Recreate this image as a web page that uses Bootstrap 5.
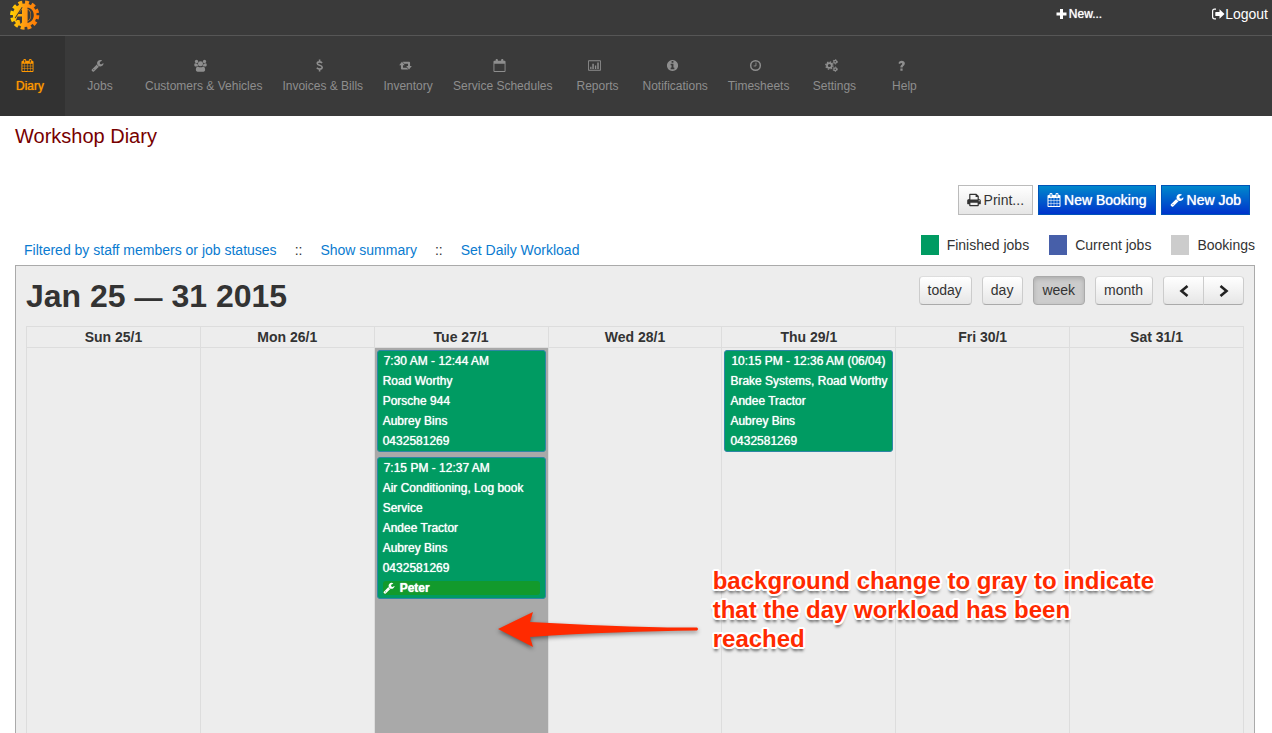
<!DOCTYPE html>
<html lang="en">
<head>
<meta charset="utf-8">
<meta name="viewport" content="width=device-width, initial-scale=1">
<title>Workshop Diary</title>
<link href="https://cdn.jsdelivr.net/npm/bootstrap@5.3.0/dist/css/bootstrap.min.css" rel="stylesheet">
<style>
body{font-family:"Liberation Sans",Arial,sans-serif;font-size:14px;line-height:20px;color:#333;background:#fff}
a{text-decoration:none}
.ico{width:14px;height:14px;fill:currentColor;stroke:none;flex:none}
.heavy{text-shadow:0 0 1px currentColor}
.topbar{height:36px;background:#3a3a3a;border-bottom:1px solid #565656}
.topbar a{color:#fff}
.topbar .logo{padding:0 0 0 10px}
.new-link{font-size:12px;margin-right:109px;gap:2px}
.new-link .ico{width:11px;height:12px}
.logout-link{margin-right:4px;padding-top:2px}
.menu{background:#3a3a3a;height:80px;font-size:12px}
.menu .nav-link{min-width:70px;height:80px;padding:23px 10px 0;color:#8e8e8e;line-height:20px}
.menu .nav-link .ico{width:13px;height:13px;margin:0 6px 1px 0}
.menu .nav-link span{line-height:20px;padding-top:3px}
.menu .nav-link.active{min-width:65px;padding-right:15px;background:#323232;color:#ff9800}
.page-title{font-size:20px;line-height:40px;color:#700;margin:0;font-weight:400}
.pane{padding:0 17px 0 15px}
.tools{padding:29px 5px 0 0;gap:5px}
.act{--bs-btn-font-size:14px;--bs-btn-line-height:20px;--bs-btn-padding-x:8px;--bs-btn-padding-y:4px;--bs-btn-border-radius:0;gap:3px}
.act-plain{border-color:#bbb;background:linear-gradient(#fff,#e6e6e6);color:#333}
.act-blue,.act-blue:hover{border-color:#0054b8;background:linear-gradient(#08c,#03c);color:#fff}
.links-row{padding:20px 0 5px}
.filters{padding:5px 0 0 9px;gap:18px}
.filters a{color:#0a7bd0}
.legend{gap:20px}
.swatch{width:18px;height:20px}
.sw-done{background:#009b62}
.sw-now{background:#475fa9}
.sw-book{background:#ccc}
.cal{border:1px solid #aaa;border-bottom:0;background:#ededed;padding:10px 10px 0}
.cal h2{font-size:32px;line-height:40px;font-weight:700;margin:0}
.cal h2 span{font-size:28px}
.cal-head{height:50px}
.views{gap:10px}
.tb{--bs-btn-font-size:14px;--bs-btn-line-height:20px;--bs-btn-border-radius:4px;height:29px;padding:3px 9px 4px 8px;color:#333;border-color:#ddd #ccc #aaa;background:linear-gradient(#fff,#e6e6e6)}
.tb.active{background:#ccc;color:#333;border-color:#aaa;box-shadow:inset 0 2px 4px rgba(0,0,0,.15)}
.btn.tb{line-height:19px}
.tb-arrow{width:41px;padding:3px 0 4px}
.week{width:100%;table-layout:fixed;border-collapse:collapse}
.week th,.week td{border:1px solid #ddd;padding:0}
.week th{text-align:center;font-weight:700;line-height:20px}
.week td{vertical-align:top;height:calc(100vh - 347px);padding:2px 2px 0;border-bottom:0}
.week td.full{background:#a9a9a9;position:relative}
.job{display:block;border:1px solid #2f86a5;border-radius:3px;background:#009b62;color:#fff;font-size:12px;line-height:20px;padding:0 3px 0 5px;margin-bottom:5px}
.job:hover{color:#fff}
.job .time{padding-left:1px}
.staff{background:#129a2c;border-radius:3px;line-height:14px;margin:3px 2px 3px 0;gap:5px;font-weight:700}
.staff .ico{width:12px;height:12px}
.callout-note{position:absolute;left:122px;top:218px;gap:12px;width:800px;pointer-events:none;z-index:2}
.callout-note svg{width:204px;height:44px;margin-top:42px;filter:drop-shadow(0 2px 2px rgba(0,0,0,.45))}
.callout-note p{margin:0;color:#ff2a00;font-size:24px;line-height:29px;font-weight:700;text-shadow:2px 0 #fff,-2px 0 #fff,0 2px #fff,0 -2px #fff,1px 2px #fff,-1px 2px #fff,2px 1px #fff,-2px 1px #fff,1px -2px #fff,-1px -2px #fff,2px -1px #fff,-2px -1px #fff,0 4px 3px rgba(0,0,0,.6)}
</style>
</head>
<body>
<svg class="d-none" aria-hidden="true">
<symbol id="calendar" viewBox="0 0 1792 1792"><path d="M192 1664h288v-288h-288v288zm352 0h320v-288h-320v288zm-352-352h288v-320h-288v320zm352 0h320v-320h-320v320zm-352-384h288v-288h-288v288zm736 736h320v-288h-320v288zm-384-736h320v-288h-320v288zm768 736h288v-288h-288v288zm-384-352h320v-320h-320v320zm-352-864v-288q0-13-9.500-22.500t-22.500-9.500h-64q-13 0-22.500 9.500t-9.500 22.500v288q0 13 9.500 22.500t22.500 9.500h64q13 0 22.500-9.500t9.500-22.500zm736 864h288v-320h-288v320zm-384-384h320v-288h-320v288zm384 0h288v-288h-288v288zm32-480v-288q0-13-9.500-22.500t-22.500-9.500h-64q-13 0-22.500 9.500t-9.500 22.500v288q0 13 9.500 22.500t22.500 9.500h64q13 0 22.500-9.500t9.500-22.500zm384-64v1280q0 52-38 90t-90 38h-1408q-52 0-90-38t-38-90v-1280q0-52 38-90t90-38h128v-96q0-66 47-113t113-47h64q66 0 113 47t47 113v96h384v-96q0-66 47-113t113-47h64q66 0 113 47t47 113v96h128q52 0 90 38t38 90z"/></symbol>
<symbol id="wrench" viewBox="0 0 1792 1792"><path d="M448 1472q0-26-19-45t-45-19-45 19-19 45 19 45 45 19 45-19 19-45zm644-420l-682 682q-37 37-90 37-52 0-91-37l-106-108q-38-36-38-90 0-53 38-91l681-681q39 98 114.500 173.500t173.500 114.500zm634-435q0 39-23 106-47 134-164.500 217.500t-258.500 83.500q-185 0-316.500-131.500t-131.500-316.500 131.500-316.500 316.500-131.500q58 0 121.500 16.500t107.500 46.500q16 11 16 28t-16 28l-293 169v224l193 107q5-3 79-48.500t135.500-81 70.500-35.500q15 0 23.500 10t8.500 25z"/></symbol>
<symbol id="info" viewBox="0 0 1792 1792"><path d="M1152 1376v-160q0-14-9-23t-23-9h-96v-512q0-14-9-23t-23-9h-320q-14 0-23 9t-9 23v160q0 14 9 23t23 9h96v320h-96q-14 0-23 9t-9 23v160q0 14 9 23t23 9h448q14 0 23-9t9-23zm-128-896v-160q0-14-9-23t-23-9h-192q-14 0-23 9t-9 23v160q0 14 9 23t23 9h192q14 0 23-9t9-23zm640 416q0 209-103 385.500t-279.500 279.500-385.500 103-385.500-103-279.500-279.500-103-385.500 103-385.500 279.500-279.500 385.500-103 385.500 103 279.500 279.500 103 385.500z"/></symbol>
<symbol id="users" viewBox="0 0 14 14"><circle cx="7" cy="5" r="2.700"/><circle cx="2.700" cy="2.700" r="1.800"/><circle cx="11.300" cy="2.700" r="1.800"/><path d="M.3 6.500C.3 5 1 4.700 1.600 4.700c.8.500 1.600.6 2.200.3.100 1.200.5 1.800.9 2.300-.8 0-1.400.2-2 .8H1.500C.8 8.100.3 7.500.3 6.500zM13.700 6.500c0-1.500-.7-1.800-1.300-1.800-.8.500-1.600.6-2.200.3-.1 1.200-.5 1.800-.9 2.300.8 0 1.400.2 2 .8h1.200c.7 0 1.200-.6 1.200-1.600zM2 11.700c0-2.300.8-3.700 2.200-3.700 1.700 1.200 3.900 1.200 5.600 0 1.400 0 2.200 1.400 2.200 3.700 0 1.300-.7 1.900-1.800 1.900H3.800c-1.100 0-1.800-.6-1.800-1.900z"/></symbol>
<symbol id="dollar" viewBox="0 0 14 14"><path fill="none" stroke="currentColor" stroke-width="1.700" d="M9.800 4.400C9 3.500 8 3.100 7 3.100c-1.500 0-2.400.7-2.400 1.700C4.600 7.300 9.900 6.300 9.900 9c0 1.100-1 1.900-2.600 1.900-1.300 0-2.400-.5-3.200-1.400M7.100 .5v2.500M7.100 11v2.500"/></symbol>
<symbol id="retweet" viewBox="0 0 14 14"><path d="M3.200 3 6.200 6.600H4.300v2.700h4.200l1.600 2H3.100c-.6 0-1-.4-1-1V6.600H.2zM10.800 11.200 7.800 7.600h1.900V5H5.500L3.900 3h7c.6 0 1 .4 1 1v3.600h1.900z"/></symbol>
<symbol id="cal-blank" viewBox="0 0 14 14"><path fill-rule="evenodd" d="M1.500 2H2.800V1.300C2.800.5 3.300 0 4 0s1.300.5 1.300 1.300V2h3.400v-.7C8.700.5 9.300 0 10 0s1.200.5 1.200 1.300V2h1.300c.6 0 1 .4 1 1v10c0 .6-.4 1-1 1h-11c-.6 0-1-.4-1-1V3c0-.6.4-1 1-1zM1.500 5v8h11V5z"/></symbol>
<symbol id="chart" viewBox="0 0 15 14"><path fill-rule="evenodd" d="M1 1h13c.6 0 1 .4 1 1v10c0 .6-.4 1-1 1H1c-.6 0-1-.4-1-1V2c0-.6.400-1 1-1zm0 1v10h13V2z"/><path d="M2.500 8.500h1.500V11H2.500zM5 5h1.700v6H5zM8 7h1.500v4H8zM10.700 3.500h1.700V11h-1.700z"/></symbol>
<symbol id="clock" viewBox="0 0 14 14"><circle cx="7" cy="7" r="5.200" fill="none" stroke="currentColor" stroke-width="1.600"/><path fill="none" stroke="currentColor" d="M7.500 3.800v3.700H5"/></symbol>
<symbol id="gears" viewBox="0 0 14 14"><circle cx="4.700" cy="7" r="2.600" fill="none" stroke="currentColor" stroke-width="1.900"/><circle cx="4.700" cy="7" r="3.900" fill="none" stroke="currentColor" stroke-width="1.400" stroke-dasharray="1.530 1.530"/><circle cx="11" cy="3" r="1.500" fill="none" stroke="currentColor" stroke-width="1.300"/><circle cx="11" cy="3" r="2.400" fill="none" stroke="currentColor" stroke-width="1" stroke-dasharray="1.260 1.260"/><circle cx="11" cy="11" r="1.500" fill="none" stroke="currentColor" stroke-width="1.300"/><circle cx="11" cy="11" r="2.400" fill="none" stroke="currentColor" stroke-width="1" stroke-dasharray="1.260 1.260"/></symbol>
<symbol id="question" viewBox="0 0 14 14"><path d="M5.800 10.200h2.400v2.400H5.800zM3.700 4.500C4.500 2.700 5.600 2 7.200 2c1.900 0 3.400 1.200 3.400 2.900 0 2.300-2.400 2.400-2.400 4.300H5.800c0-2.800 2-2.900 2-4 0-.6-.4-.9-1-.9-.7 0-1 .4-1.500 1.200z"/></symbol>
<symbol id="plus" viewBox="0 0 11 12"><path d="M4 1h3v3.500h3.500v3H7V11H4V7.500H.5v-3H4z"/></symbol>
<symbol id="signout" viewBox="0 0 14 14"><path fill="none" stroke="currentColor" stroke-width="1.200" d="M5 2.200H3.500C2.300 2.200 1.600 3 1.600 4.200v5.600c0 1.200.7 2 1.900 2H5"/><path d="M8.500 2.200 13.500 7l-5 4.800V9H4.900c-.4 0-.6-.2-.6-.6V5.600c0-.4.2-.6.600-.6h3.600z"/></symbol>
<symbol id="print" viewBox="0 0 14 14"><path fill-rule="evenodd" d="M2.200 6V1.500C2.200 1 2.500.8 3 .8h6.300L11.800 3v3c1.200 0 2 .7 2 1.800v3c0 .3-.2.500-.5.500h-1.500v1.200c0 .5-.3.700-.8.700H3c-.5 0-.8-.2-.8-.7v-1.200H.7c-.3 0-.5-.2-.5-.5v-3C.2 6.700 1 6 2.200 6zm1.200-4v4.600h7.200V4H8.600V2zm0 7.800V12h7.200V9.800zm8.300-2.600v1.100h1V7.200z"/></symbol>
</svg>

<header>
<div class="topbar d-flex justify-content-between align-items-start">
<a class="logo d-block" href="#" aria-label="Home"><svg class="d-block" width="30" height="30" viewBox="0 0 30 30"><defs><linearGradient id="gold" gradientUnits="userSpaceOnUse" x1="0" y1="0" x2="30" y2="0"><stop offset="0" stop-color="#ffd500"/><stop offset=".5" stop-color="#ff9a12"/><stop offset="1" stop-color="#ff7300"/></linearGradient></defs><circle cx="14.700" cy="15.200" r="11.800" fill="url(#gold)"/><circle cx="14.700" cy="15.200" r="12.700" fill="none" stroke="url(#gold)" stroke-width="3.800" stroke-dasharray="3.850 2.800"/><path fill="#3a3a3a" d="M12 9.200V14H8.400zM7.400 16.500H12v6l-1.500 1.500-1-4H7L5.600 21.200zM12.600 7.500l-.8-.4L4.600 18l1 .2zM17.600 7.500c4.200.8 6.200 3.800 6.200 7.600s-2 7-6.200 8l-.2-1.500c2.500-.8 3.700-3.300 3.700-6.500s-1.200-5.300-3.700-6zM17.600 9.500c2.200 1 3 3 3 5.600s-.8 5-3 6z"/></svg></a>
<div class="d-flex"><a class="new-link heavy d-flex align-items-center pt-1" href="#"><svg class="ico"><use href="#plus"/></svg>New...</a>
<a class="logout-link d-flex align-items-center pt-1" href="#"><svg class="ico"><use href="#signout"/></svg>Logout</a></div>
</div>
<nav class="menu" aria-label="Main"><div class="nav flex-nowrap text-nowrap">
<a class="nav-link active heavy d-flex flex-column align-items-center" aria-current="page" href="#"><svg class="ico"><use href="#calendar"/></svg><span>Diary</span></a>
<a class="nav-link d-flex flex-column align-items-center" href="#"><svg class="ico"><use href="#wrench"/></svg><span>Jobs</span></a>
<a class="nav-link d-flex flex-column align-items-center" href="#"><svg class="ico"><use href="#users"/></svg><span>Customers &amp; Vehicles</span></a>
<a class="nav-link d-flex flex-column align-items-center" href="#"><svg class="ico"><use href="#dollar"/></svg><span>Invoices &amp; Bills</span></a>
<a class="nav-link d-flex flex-column align-items-center" href="#"><svg class="ico"><use href="#retweet"/></svg><span>Inventory</span></a>
<a class="nav-link d-flex flex-column align-items-center" href="#"><svg class="ico"><use href="#cal-blank"/></svg><span>Service Schedules</span></a>
<a class="nav-link d-flex flex-column align-items-center" href="#"><svg class="ico"><use href="#chart"/></svg><span>Reports</span></a>
<a class="nav-link d-flex flex-column align-items-center" href="#"><svg class="ico"><use href="#info"/></svg><span>Notifications</span></a>
<a class="nav-link d-flex flex-column align-items-center" href="#"><svg class="ico"><use href="#clock"/></svg><span>Timesheets</span></a>
<a class="nav-link d-flex flex-column align-items-center" href="#"><svg class="ico"><use href="#gears"/></svg><span>Settings</span></a>
<a class="nav-link d-flex flex-column align-items-center" href="#"><svg class="ico"><use href="#question"/></svg><span>Help</span></a>
</div></nav>
</header>

<main class="pane">
<h1 class="page-title">Workshop Diary</h1>
<div class="tools d-flex justify-content-end">
<button type="button" class="btn act act-plain d-flex align-items-center"><svg class="ico"><use href="#print"/></svg>Print...</button>
<button type="button" class="btn act act-blue heavy d-flex align-items-center"><svg class="ico"><use href="#calendar"/></svg>New Booking</button>
<button type="button" class="btn act act-blue heavy d-flex align-items-center"><svg class="ico"><use href="#wrench"/></svg>New Job</button>
</div>
<div class="links-row d-flex justify-content-between">
<div class="filters d-flex"><a href="#">Filtered by staff members or job statuses</a><span>::</span><a href="#">Show summary</a><span>::</span><a href="#">Set Daily Workload</a></div>
<div class="legend d-flex">
<div class="d-flex gap-2"><span class="swatch sw-done"></span>Finished jobs</div>
<div class="d-flex gap-2"><span class="swatch sw-now"></span>Current jobs</div>
<div class="d-flex gap-2"><span class="swatch sw-book"></span>Bookings</div>
</div>
</div>
<section class="cal">
<div class="cal-head d-flex justify-content-between align-items-start">
<h2>Jan 25 <span>—</span> 31 2015</h2>
<div class="d-flex views">
<button type="button" class="btn tb">today</button>
<button type="button" class="btn tb">day</button>
<button type="button" class="btn tb active" aria-pressed="true">week</button>
<button type="button" class="btn tb">month</button>
<div class="btn-group">
<button type="button" class="btn tb tb-arrow" aria-label="Previous"><svg width="10" height="12" viewBox="0 0 10 12"><path d="M8.500 1 2.500 6l6 5" fill="none" stroke="#222" stroke-width="2.600"/></svg></button>
<button type="button" class="btn tb tb-arrow" aria-label="Next"><svg width="10" height="12" viewBox="0 0 10 12"><path d="M1.500 1l6 5-6 5" fill="none" stroke="#222" stroke-width="2.600"/></svg></button>
</div>
</div>
</div>
<table class="week">
<thead><tr><th scope="col">Sun 25/1</th><th scope="col">Mon 26/1</th><th scope="col">Tue 27/1</th><th scope="col">Wed 28/1</th><th scope="col">Thu 29/1</th><th scope="col">Fri 30/1</th><th scope="col">Sat 31/1</th></tr></thead>
<tbody><tr>
<td></td><td></td>
<td class="full">
<a class="job heavy" href="#"><div class="time">7:30 AM - 12:44 AM</div><div>Road Worthy</div><div>Porsche 944</div><div>Aubrey Bins</div><div>0432581269</div></a>
<a class="job heavy" href="#"><div class="time">7:15 PM - 12:37 AM</div><div>Air Conditioning, Log book Service</div><div>Andee Tractor</div><div>Aubrey Bins</div><div>0432581269</div><div class="staff d-flex align-items-center"><svg class="ico"><use href="#wrench"/></svg>Peter</div></a>
<div class="callout-note d-flex align-items-start"><svg viewBox="0 0 204 44" aria-hidden="true"><path fill="#ff2a00" d="M1 21 36 4 33 14C90 17 150 20 200 19.500q2 1.500 0 3C150 23 90 25 33 29l3 10z"/></svg>
<p>background change to gray to indicate<br>that the day workload has been<br>reached</p></div>
</td>
<td></td>
<td><a class="job heavy" href="#"><div class="time">10:15 PM - 12:36 AM (06/04)</div><div>Brake Systems, Road Worthy</div><div>Andee Tractor</div><div>Aubrey Bins</div><div>0432581269</div></a></td>
<td></td><td></td>
</tr></tbody>
</table>
</section>
</main>
<script src="https://cdn.jsdelivr.net/npm/bootstrap@5.3.0/dist/js/bootstrap.bundle.min.js"></script>
</body>
</html>
